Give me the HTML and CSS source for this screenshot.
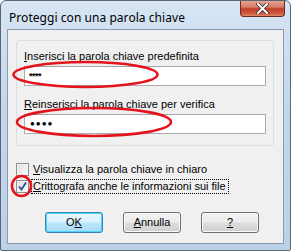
FILE: index.html
```html
<!DOCTYPE html>
<html>
<head>
<meta charset="utf-8">
<link rel="stylesheet" href="styles.css">
</head>
<body>
<div class="window">
  <div class="titlebar">
    <span class="title">Proteggi con una parola chiave</span>
    <div class="close"><svg width="13" height="11" viewBox="0 0 13 11"><path d="M2 1 L11 10 M11 1 L2 10" stroke="#3a2a2a" stroke-width="3.6" stroke-linecap="square"/><path d="M2 1 L11 10 M11 1 L2 10" stroke="#ffffff" stroke-width="2" stroke-linecap="square"/></svg></div>
  </div>
  <div class="body">
    <div class="client">
      <div class="group">
        <div class="label"><u>I</u>nserisci la parola chiave predefinita</div>
        <div class="field small">****</div>
        <div class="label second"><u>R</u>einserisci la parola chiave per verifica</div>
        <div class="field dots">●●●●</div>
      </div>
      <div class="checks">
        <div class="check"><span class="box"></span><span class="ctext"><u>V</u>isualizza la parola chiave in chiaro</span></div>
        <div class="check"><span class="box"><svg width="11" height="11" viewBox="0 0 11 11"><path d="M2 5.5 L4.5 8.5 L9 1.5" fill="none" stroke="#2b4a9c" stroke-width="1.8"/></svg></span><span class="ctext focus"><u>C</u>rittografa anche le informazioni sui file</span></div>
      </div>
      <div class="buttons">
        <div class="btn default">O<u>K</u></div>
        <div class="btn"><u>A</u>nnulla</div>
        <div class="btn"><u>?</u></div>
      </div>
    </div>
  </div>
  <svg class="marks" width="291" height="251" viewBox="0 0 291 251">
    <ellipse cx="85.5" cy="74.5" rx="72" ry="12.5" fill="none" stroke="#e5141c" stroke-width="2.6"/>
    <ellipse cx="94" cy="122" rx="77" ry="14" fill="none" stroke="#e5141c" stroke-width="2.6"/>
    <ellipse cx="21.5" cy="186" rx="9.5" ry="10" fill="none" stroke="#e5141c" stroke-width="2.6"/>
  </svg>
</div>
</body>
</html>
```

FILE: styles.css
```css
html, body {
  margin: 0;
  padding: 0;
  background: #ffffff;
}
.window {
  position: relative;
  width: 291px;
  height: 251px;
  box-sizing: border-box;
  border: 1px solid #5b6470;
  border-radius: 6px 6px 2px 2px;
  background: linear-gradient(180deg, #d7e5f4 0%, #c3d7ed 40%, #bcd1e9 100%);
  display: flex;
  flex-direction: column;
  overflow: hidden;
}
.titlebar {
  height: 28px;
  display: flex;
  align-items: flex-start;
  justify-content: space-between;
  flex: none;
}
.title {
  font-family: "Noto Sans", sans-serif;
  font-size: 12px;
  color: #000;
  margin: 8px 0 0 8px;
  letter-spacing: 0.05px;
}
.close {
  width: 45px;
  height: 17px;
  margin-right: 5px;
  margin-top: -1px;
  box-sizing: border-box;
  border: 1px solid #6a2c22;
  border-top: none;
  border-radius: 0 0 4px 4px;
  background: linear-gradient(180deg, #e9a995 0%, #d67a64 45%, #c1402a 55%, #cf5a42 85%, #e28a6c 100%);
  display: flex;
  align-items: center;
  justify-content: center;
}
.body {
  flex: 1;
  padding: 0 6px 6px 6px;
  display: flex;
}
.client {
  flex: 1;
  background: #f0f0f0;
  border: 1px solid #8a9bb0;
  padding: 10px 9px 0 8px;
  display: flex;
  flex-direction: column;
  font-family: "Liberation Sans", sans-serif;
  font-size: 11px;
  color: #000;
}
.group {
  height: 106px;
  box-sizing: border-box;
  border: 1px solid #d5dfe5;
  border-radius: 3px;
  padding: 9px 7px 0 7px;
  display: flex;
  flex-direction: column;
}
.label {
  height: 13px;
  line-height: 13px;
  margin-bottom: 3px;
}
.label.second {
  margin-top: 12px;
}
.field {
  height: 20px;
  box-sizing: border-box;
  width: 242px;
  border: 1px solid #abadb3;
  border-top-color: #a3a5ab;
  background: #fff;
  padding-left: 4px;
  line-height: 18px;
}
.field.small {
  font-size: 9px;
  font-weight: bold;
  letter-spacing: -0.5px;
}
.field.dots {
  font-size: 8px;
  letter-spacing: 1px;
  padding-left: 5px;
}
.checks {
  margin-top: 16px;
  display: flex;
  flex-direction: column;
  gap: 3px;
}
.check {
  display: flex;
  align-items: center;
  height: 14px;
}
.box {
  width: 13px;
  height: 13px;
  box-sizing: border-box;
  border: 1px solid #8e8f8f;
  background: linear-gradient(135deg, #dcdcdc 0%, #f4f4f4 70%, #fbfbfb 100%);
  box-shadow: inset 0 0 0 1px #f4f4f4;
  margin-right: 2px;
  display: flex;
  align-items: center;
  justify-content: center;
}
.ctext {
  padding: 0 2px 1px 1px;
  border: 1px dotted transparent;
  line-height: 12px;
}
.ctext.focus {
  border-color: #000;
}
.buttons {
  margin-top: 19px;
  display: flex;
  gap: 20px;
  padding-left: 29px;
}
.btn {
  width: 58px;
  height: 21px;
  box-sizing: border-box;
  border: 1px solid #707070;
  border-radius: 3px;
  background: linear-gradient(180deg, #f2f2f2 0%, #ebebeb 49%, #dddddd 51%, #cfcfcf 100%);
  box-shadow: inset 0 0 0 1px #fbfbfb;
  text-align: center;
  line-height: 19px;
}
.btn.default {
  border-color: #3c7fb1;
  background: linear-gradient(180deg, #eaf6fd 0%, #d9f0fc 49%, #bee6fd 51%, #a7d9f5 100%);
  box-shadow: inset 0 0 0 1px #48d8fb;
}
.marks {
  position: absolute;
  left: -1px;
  top: -1px;
  pointer-events: none;
}
```
